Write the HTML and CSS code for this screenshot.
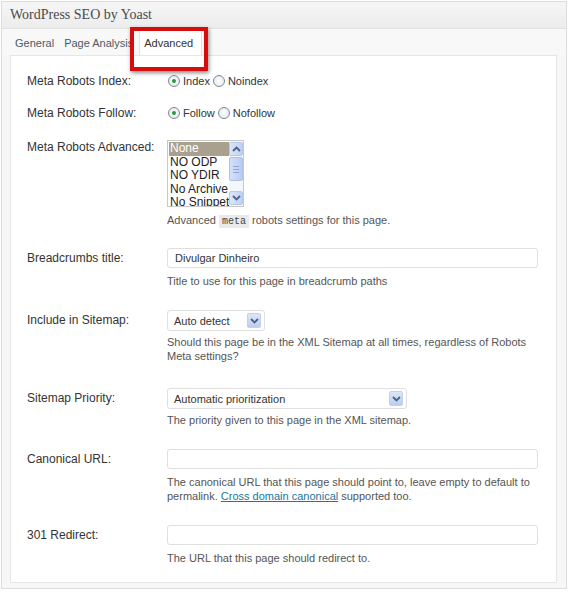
FILE: index.html
```html
<!DOCTYPE html>
<html>
<head>
<meta charset="utf-8">
<link rel="stylesheet" href="styles.css">
</head>
<body>
<div class="box">
  <div class="hdr">WordPress SEO by Yoast</div>
  <div class="tabs">
    <span class="tab">General</span>
    <span class="tab">Page Analysis</span>
    <span class="tab active">Advanced</span>
    <span class="mark"></span>
  </div>
  <div class="panel">
    <div class="row radio-row">
      <div class="lbl">Meta Robots Index:</div>
      <div class="fld radios">
        <span class="rad on"></span><span class="rt">Index</span>
        <span class="rad"></span><span class="rt">Noindex</span>
      </div>
    </div>
    <div class="row radio-row">
      <div class="lbl">Meta Robots Follow:</div>
      <div class="fld radios">
        <span class="rad on"></span><span class="rt">Follow</span>
        <span class="rad"></span><span class="rt">Nofollow</span>
      </div>
    </div>
    <div class="row row-list">
      <div class="lbl lbl-top">Meta Robots Advanced:</div>
      <div class="fld">
        <div class="listbox">
          <div class="items">
            <div class="it sel">None</div>
            <div class="it">NO ODP</div>
            <div class="it">NO YDIR</div>
            <div class="it">No Archive</div>
            <div class="it">No Snippet</div>
          </div>
          <div class="sbar">
            <span class="sbtn up"><svg width="9" height="6" viewBox="0 0 9 6"><path d="M1 5 L4.5 1.5 L8 5" fill="none" stroke="#4d6185" stroke-width="1.8"/></svg></span>
            <span class="thumb"><i></i><i></i><i></i></span>
            <span class="strack"></span>
            <span class="sbtn dn"><svg width="9" height="6" viewBox="0 0 9 6"><path d="M1 1 L4.5 4.5 L8 1" fill="none" stroke="#4d6185" stroke-width="1.8"/></svg></span>
          </div>
        </div>
        <div class="desc">Advanced <code>meta</code> robots settings for this page.</div>
      </div>
    </div>
    <div class="row">
      <div class="lbl">Breadcrumbs title:</div>
      <div class="fld">
        <div class="inp">Divulgar Dinheiro</div>
        <div class="desc">Title to use for this page in breadcrumb paths</div>
      </div>
    </div>
    <div class="row row-sitemap">
      <div class="lbl">Include in Sitemap:</div>
      <div class="fld">
        <div class="sel-box short"><span>Auto detect</span><span class="arrow"><svg width="9" height="6" viewBox="0 0 9 6"><path d="M1 1 L4.5 4.5 L8 1" fill="none" stroke="#4d6185" stroke-width="1.8"/></svg></span></div>
        <div class="desc">Should this page be in the XML Sitemap at all times, regardless of Robots Meta settings?</div>
      </div>
    </div>
    <div class="row">
      <div class="lbl">Sitemap Priority:</div>
      <div class="fld">
        <div class="sel-box long"><span>Automatic prioritization</span><span class="arrow"><svg width="9" height="6" viewBox="0 0 9 6"><path d="M1 1 L4.5 4.5 L8 1" fill="none" stroke="#4d6185" stroke-width="1.8"/></svg></span></div>
        <div class="desc">The priority given to this page in the XML sitemap.</div>
      </div>
    </div>
    <div class="row">
      <div class="lbl">Canonical URL:</div>
      <div class="fld">
        <div class="inp"></div>
        <div class="desc">The canonical URL that this page should point to, leave empty to default to permalink. <a href="#">Cross domain canonical</a> supported too.</div>
      </div>
    </div>
    <div class="row">
      <div class="lbl">301 Redirect:</div>
      <div class="fld">
        <div class="inp"></div>
        <div class="desc">The URL that this page should redirect to.</div>
      </div>
    </div>
  </div>
</div>
</body>
</html>
```
FILE: styles.css
```css
html, body { margin: 0; padding: 0; background: #fff; }
body { font-family: "Liberation Sans", Arial, sans-serif; color: #333; }

.box {
  margin: 1px 0 0 1px;
  width: 566px;
  height: 588px;
  border: 1px solid #dcdcdc;
  background: #f7f7f7;
  box-sizing: border-box;
  position: relative;
}
.hdr {
  height: 26px;
  line-height: 25px;
  padding-left: 8px;
  font-family: "Liberation Serif", "Times New Roman", serif;
  font-size: 14px;
  color: #4a4a4a;
  background: linear-gradient(#f6f6f6, #ececec);
  border-bottom: 1px solid #e2e2e2;
}
.tabs {
  height: 26px;
  display: flex;
  align-items: flex-end;
  padding-left: 12px;
  background: #f8f8f8;
  position: relative;
}
.tab {
  font-size: 11px;
  color: #4b5866;
  padding: 0 3px 5px 1px;
  margin-right: 6px;
  line-height: 14px;
}
.tab.active {
  background: #fff;
  color: #333;
  padding: 5px 8px 5px 4px;
  margin-left: -3px;
  border: 1px solid #e0e0e0;
  border-bottom: none;
}
.mark {
  position: absolute;
  left: 128px;
  top: -2px;
  width: 70px;
  height: 36px;
  border: 4px solid #d60d0d;
  box-shadow: 1px 2px 4px rgba(0,0,0,0.45);
}

.panel {
  margin: 0 8px 0 8px;
  width: 547px;
  box-sizing: border-box;
  background: #fff;
  border: 1px solid #e6e6e6;
  padding: 9px 0 6px 16px;
}
.row {
  display: grid;
  grid-template-columns: 140px 371px;
  padding: 11px 0;
  align-items: start;
}
.row.radio-row { padding: 9px 0; }
.row.row-list { padding-bottom: 8px; }
.row.row-sitemap { padding-bottom: 14px; }
.lbl {
  font-size: 12px;
  line-height: 14px;
  color: #333;
  padding-top: 3px;
}
.lbl.lbl-top { padding-top: 0; }
.radio-row .lbl { padding-top: 0; }
.radios {
  display: flex;
  align-items: center;
  font-size: 11px;
  line-height: 14px;
  color: #333;
}
.rad {
  width: 10px;
  height: 10px;
  border: 1px solid #7a8a99;
  border-radius: 50%;
  background: radial-gradient(#ffffff, #dfe3e8);
  margin: 0 3px 0 1px;
  position: relative;
}
.rad.on::after {
  content: "";
  position: absolute;
  left: 3px; top: 3px;
  width: 4px; height: 4px;
  border-radius: 50%;
  background: #2c9a34;
}
.rt { margin-right: 2px; }

.listbox {
  width: 77px;
  height: 67px;
  border: 1px solid #c8c8c8;
  box-sizing: border-box;
  display: flex;
  overflow: hidden;
  background: #fff;
}
.items { flex: 1; padding: 1px 0 0 1px; }
.it {
  font-size: 12px;
  line-height: 13.5px;
  height: 13.5px;
  padding-left: 1px;
  color: #222;
  white-space: nowrap;
  overflow: hidden;
}
.it.sel { background: #a9a18e; color: #fff; }
.sbar {
  width: 15px;
  display: flex;
  flex-direction: column;
  background: #f3f6fb;
  padding: 1px 0;
}
.sbtn {
  height: 14px;
  display: flex;
  align-items: center;
  justify-content: center;
  background: linear-gradient(90deg, #dbe6fb, #bfd0f2);
  border: 1px solid #b8c8ea;
  border-radius: 2px;
  box-sizing: border-box;
}
.thumb {
  height: 22px;
  margin-top: 1px;
  background: linear-gradient(90deg, #d5e1fb, #b9cbf3);
  border: 1px solid #b0c2ea;
  border-radius: 2px;
  display: flex;
  flex-direction: column;
  justify-content: center;
  align-items: center;
  gap: 2px;
}
.thumb i { display: block; width: 6px; height: 1px; background: #92a6d3; }
.strack { flex: 1; }

.desc {
  font-size: 11px;
  line-height: 14px;
  color: #555;
  margin-top: 6px;
}
.desc code {
  font-family: "Liberation Mono", "Courier New", monospace;
  font-size: 10px;
  background: #eaeaea;
  padding: 1px 3px;
  color: #444;
}
.desc a { color: #21759b; }

.inp {
  height: 20px;
  width: 371px;
  box-sizing: border-box;
  border: 1px solid #dfdfdf;
  border-radius: 3px;
  font-size: 11px;
  line-height: 18px;
  padding-left: 7px;
  color: #333;
  background: #fff;
}
.sel-box {
  height: 21px;
  box-sizing: border-box;
  border: 1px solid #dfdfdf;
  border-radius: 3px;
  display: flex;
  align-items: center;
  justify-content: space-between;
  font-size: 11px;
  color: #333;
  padding: 0 3px 0 6px;
  background: #fff;
}
.sel-box.short { width: 98px; }
.sel-box.long { width: 240px; }
.sel-box + .desc { margin-top: 4px; }
.arrow {
  width: 14px;
  height: 15px;
  display: flex;
  align-items: center;
  justify-content: center;
  background: linear-gradient(#dde7fb, #bccdf0);
  border: 1px solid #c2d0ee;
  border-radius: 2px;
  box-sizing: border-box;
}
```
